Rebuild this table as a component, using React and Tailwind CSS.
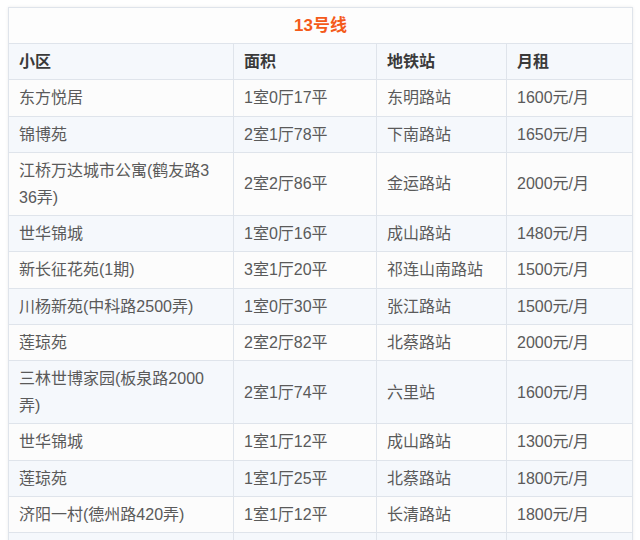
const rows = [
  ["东方悦居", "1室0厅17平", "东明路站", "1600元/月"],
  ["锦博苑", "2室1厅78平", "下南路站", "1650元/月"],
  ["江桥万达城市公寓(鹤友路336弄)", "2室2厅86平", "金运路站", "2000元/月"],
  ["世华锦城", "1室0厅16平", "成山路站", "1480元/月"],
  ["新长征花苑(1期)", "3室1厅20平", "祁连山南路站", "1500元/月"],
  ["川杨新苑(中科路2500弄)", "1室0厅30平", "张江路站", "1500元/月"],
  ["莲琼苑", "2室2厅82平", "北蔡路站", "2000元/月"],
  ["三林世博家园(板泉路2000弄)", "2室1厅74平", "六里站", "1600元/月"],
  ["世华锦城", "1室1厅12平", "成山路站", "1300元/月"],
  ["莲琼苑", "1室1厅25平", "北蔡路站", "1800元/月"],
  ["济阳一村(德州路420弄)", "1室1厅12平", "长清路站", "1800元/月"],
  ["\u00a0", "\u00a0", "\u00a0", "\u00a0"],
];

const cell = "border border-[#dfe4eb] px-[10px] py-1 align-middle break-all";

export default function App() {
  return (
    <div className="min-h-[540px] bg-white pl-2 pt-[7px] font-['Liberation_Sans','Noto_Sans_CJK_SC',sans-serif] text-[16px] leading-[27.2px]">
      <table className="w-[624px] table-fixed border-collapse shadow-[0_0_3px_rgba(0,0,0,0.08)]">
        <colgroup>
          <col className="w-[225px]" />
          <col className="w-[143px]" />
          <col className="w-[130px]" />
          <col className="w-[126px]" />
        </colgroup>
        <thead>
          <tr className="bg-[#fdfdfd]">
            <th colSpan={4} className={cell + " text-center text-[17px] font-bold text-[#f45a1a]"}>
              13号线
            </th>
          </tr>
          <tr className="bg-[#f5f8fc] text-left font-bold text-[#3a3a3a]">
            <th className={cell}>小区</th>
            <th className={cell}>面积</th>
            <th className={cell}>地铁站</th>
            <th className={cell}>月租</th>
          </tr>
        </thead>
        <tbody className="text-[#5a5a5a]">
          {rows.map((r, i) => (
            <tr key={i} className={i % 2 === 0 ? "bg-[#fcfcfc]" : "bg-[#f5f8fc]"}>
              {r.map((c, j) => (
                <td key={j} className={cell + (j === 0 ? " pr-[19px]" : "")}>{c}</td>
              ))}
            </tr>
          ))}
        </tbody>
      </table>
    </div>
  );
}
